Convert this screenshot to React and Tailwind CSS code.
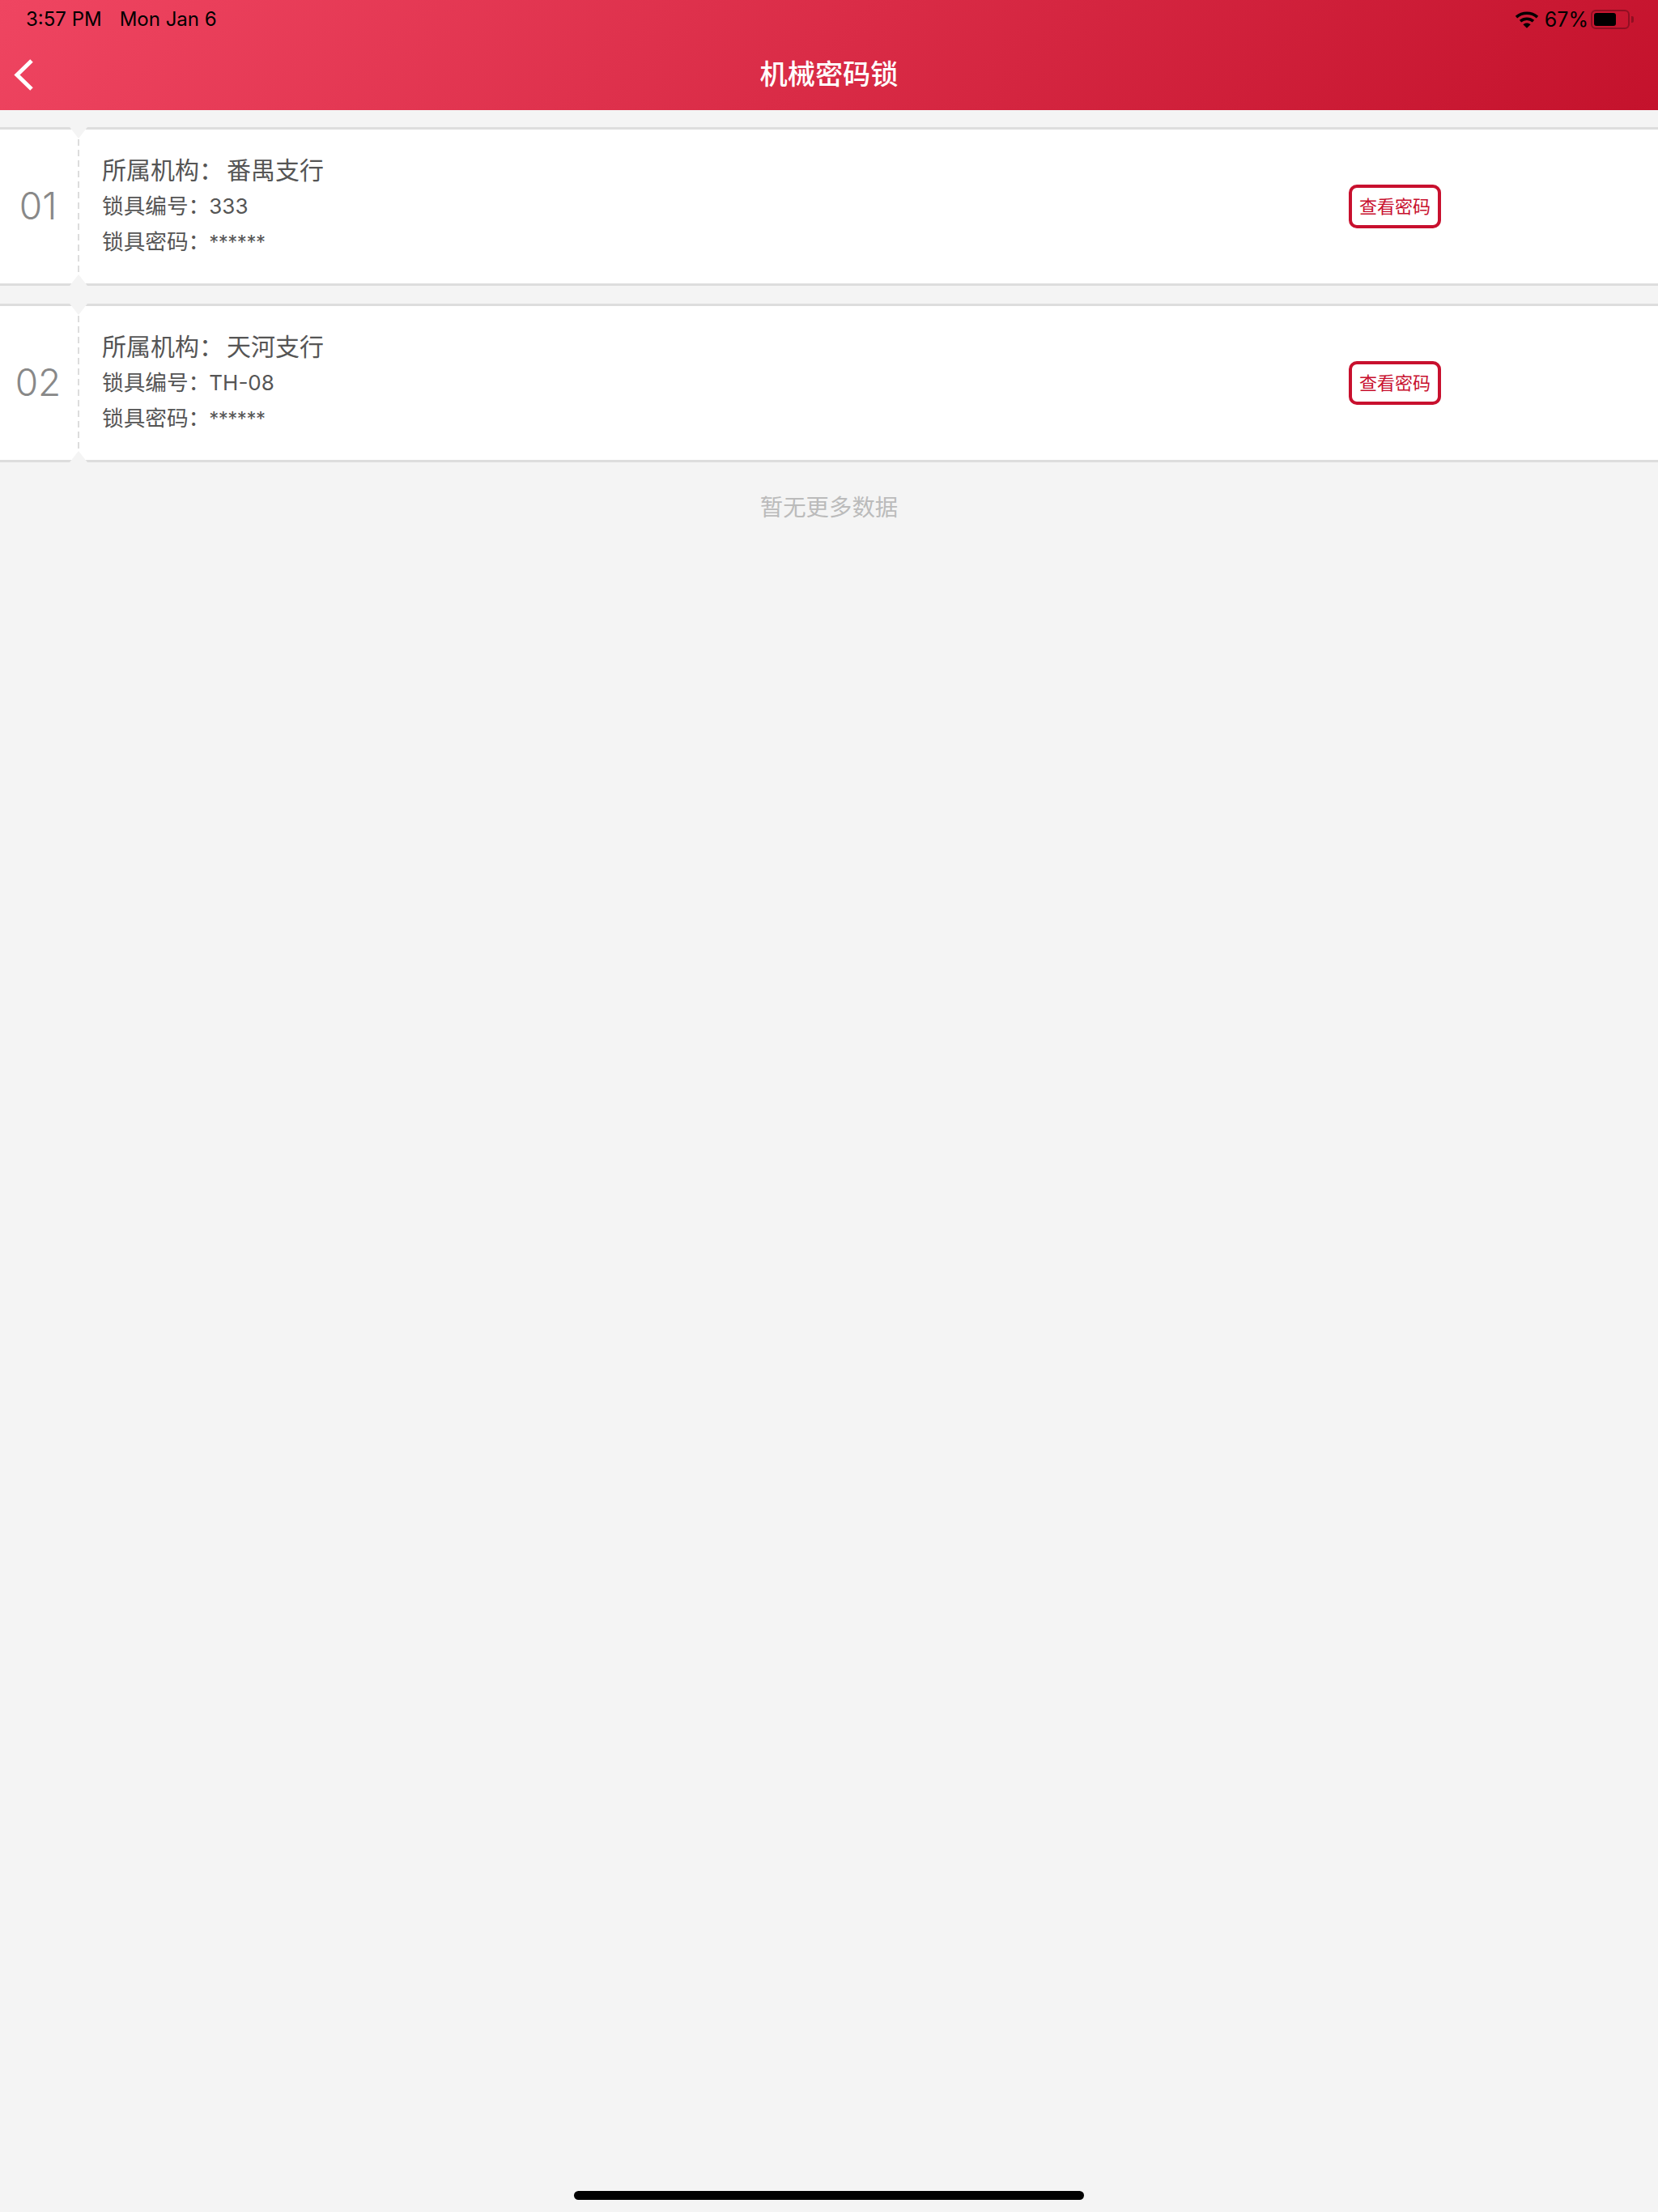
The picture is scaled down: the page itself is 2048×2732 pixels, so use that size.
const CJK = "font-['Inter','Noto_Sans_CJK_SC',sans-serif]";

function Wifi() {
  return (
    <svg width="30" height="22" viewBox="0 0 30 22" className="block" aria-hidden="true">
      <path d="M2 8.2C9.4 1.6 20.6 1.6 28 8.2" fill="none" stroke="#000" strokeWidth="3.6" />
      <path d="M7 13.2C11.6 9.2 18.4 9.2 23 13.2" fill="none" stroke="#000" strokeWidth="3.6" />
      <path d="M10.4 17.2 15 21.8 19.6 17.2C17 14.9 13 14.9 10.4 17.2Z" fill="#000" />
    </svg>
  );
}

function Battery() {
  return (
    <div className="flex items-center">
      <div className="h-[24px] w-[48px] rounded-[6px] border-2 border-[#8f0f22] p-[2px]">
        <div className="h-full w-[27px] rounded-[3px] bg-black" />
      </div>
      <div className="ml-[2px] h-[8px] w-[3px] rounded-r-[2px] bg-[#8f0f22]" />
    </div>
  );
}

function Card({ no, org, code }) {
  return (
    <div className="relative flex h-[196px] border-y-[3px] border-[#dddddd] bg-white">
      <div className="flex w-[96px] items-center justify-center pb-[2px] pr-[2px] text-[46px] font-light leading-none text-[#888888]">
        {no}
      </div>
      <div className="my-[12px] w-[2px] bg-[repeating-linear-gradient(to_bottom,#dddddd_0,#dddddd_8px,transparent_8px,transparent_13px)]" />
      <div className="flex flex-1 items-center justify-between pl-[28px] pr-[268px]">
        <div className="-mt-[1px] flex flex-col text-[#555555]">
          <div className="text-[30px] leading-[44px]">
            所属机构：<span className="ml-[4px]">{org}</span>
          </div>
          <div className="text-[26.67px] leading-[44px]">
            锁具编号：<span className="-ml-[1px] text-[26px]">{code}</span>
          </div>
          <div className="text-[26.67px] leading-[42px]">
            锁具密码：<span className="-ml-[1px] text-[24px] tracking-[-0.5px]">******</span>
          </div>
        </div>
        <button className="flex h-[54px] w-[114px] items-center justify-center rounded-[10px] border-[4px] border-[#c8102e] pb-[1px] text-[22px] leading-none text-[#c8102e]">
          查看密码
        </button>
      </div>
      <div className="absolute -top-[3px] left-[86px] h-[14px] w-[22px] bg-[#f4f4f4] [clip-path:polygon(0_0,100%_0,50%_100%)]" />
      <div className="absolute -bottom-[3px] left-[86px] h-[14px] w-[22px] bg-[#f4f4f4] [clip-path:polygon(50%_0,100%_100%,0_100%)]" />
    </div>
  );
}

export default function App() {
  return (
    <div className={`flex min-h-[2732px] flex-col bg-[#f4f4f4] ${CJK}`}>
      <header className="h-[136px] bg-[linear-gradient(135deg,#ef4561,#c4122c)]">
        <div className="flex h-[48px] items-center justify-between pl-[32px] pr-[30px] text-[24px] leading-none text-black">
          <div className="flex gap-[22px]">
            <span>3:57 PM</span>
            <span>Mon Jan 6</span>
          </div>
          <div className="flex items-center">
            <Wifi />
            <span className="ml-[7px] mr-[3px] text-[25px]">67%</span>
            <Battery />
          </div>
        </div>
        <div className="relative flex h-[88px] items-center justify-center">
          <svg width="28" height="42" viewBox="0 0 28 42" className="absolute left-[16px] top-[24px]" aria-hidden="true">
            <path d="M23 3 5 20.5 23 38" fill="none" stroke="#fff" strokeWidth="5" />
          </svg>
          <h1 className="text-[34.2px] font-medium leading-none text-white">机械密码锁</h1>
        </div>
      </header>
      <main className="flex flex-col gap-[22px] pt-[21px]">
        <Card no="01" org="番禺支行" code="333" />
        <Card no="02" org="天河支行" code="TH-08" />
      </main>
      <p className="mt-[36px] text-center text-[28.4px] leading-[40px] text-[#bbbbbb]">暂无更多数据</p>
      <div className="mt-auto mb-[15px] h-[11px] w-[630px] self-center rounded-full bg-black" />
    </div>
  );
}
